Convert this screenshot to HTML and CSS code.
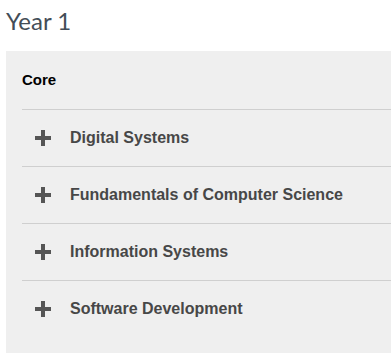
FILE: index.html
```html
<!DOCTYPE html>
<html lang="en">
<head>
    <meta charset="UTF-8">
    <meta name="viewport" content="width=device-width, initial-scale=1.0">
    <title>Year 1</title>
    <link rel="stylesheet" href="styles.css">
</head>
<body>

    <h2 class="year">Year 1</h2>

    <div class="panel">
        <h3 class="panel-title">Core</h3>

        <ul class="subjects">
            <li class="subject">
                <span class="plus"></span>
                <span class="subject-name">Digital Systems</span>
            </li>
            <li class="subject">
                <span class="plus"></span>
                <span class="subject-name">Fundamentals of Computer Science</span>
            </li>
            <li class="subject">
                <span class="plus"></span>
                <span class="subject-name">Information Systems</span>
            </li>
            <li class="subject">
                <span class="plus"></span>
                <span class="subject-name">Software Development</span>
            </li>
        </ul>
    </div>

</body>
</html>
```

FILE: styles.css
```css
* {
    box-sizing: border-box;
}

body {
    margin: 0;
    padding: 0 0 0 6px;
    font-family: "Liberation Sans", Arial, sans-serif;
}

.year {
    margin: 0;
    padding-top: 6px;
    height: 51px;
    font-family: Lato, "Open Sans", sans-serif;
    font-weight: normal;
    font-size: 24px;
    color: #434d57;
}

/* grey block with the core subjects */
.panel {
    background-color: #efefef;
    padding: 0 0 20px 16px;
}

.panel-title {
    margin: 0;
    height: 58px;
    padding-bottom: 2px;
    display: flex;
    align-items: center;
    font-size: 15px;
    font-weight: bold;
    color: #000;
}

.subjects {
    list-style: none;
    margin: 0;
    padding: 0;
}

.subject {
    display: flex;
    align-items: center;
    height: 57px;
    border-top: 1px solid #cfcfcf;
    padding-left: 13px;
}

/* plus sign drawn with two bars */
.plus {
    position: relative;
    width: 16px;
    height: 16px;
    margin-right: 19px;
}

.plus:before,
.plus:after {
    content: "";
    position: absolute;
    background-color: #555;
}

.plus:before {
    left: 0;
    top: 6px;
    width: 16px;
    height: 4px;
}

.plus:after {
    left: 6px;
    top: 0;
    width: 4px;
    height: 16px;
}

.subject-name {
    font-size: 16px;
    font-weight: bold;
    color: #474747;
}
```
